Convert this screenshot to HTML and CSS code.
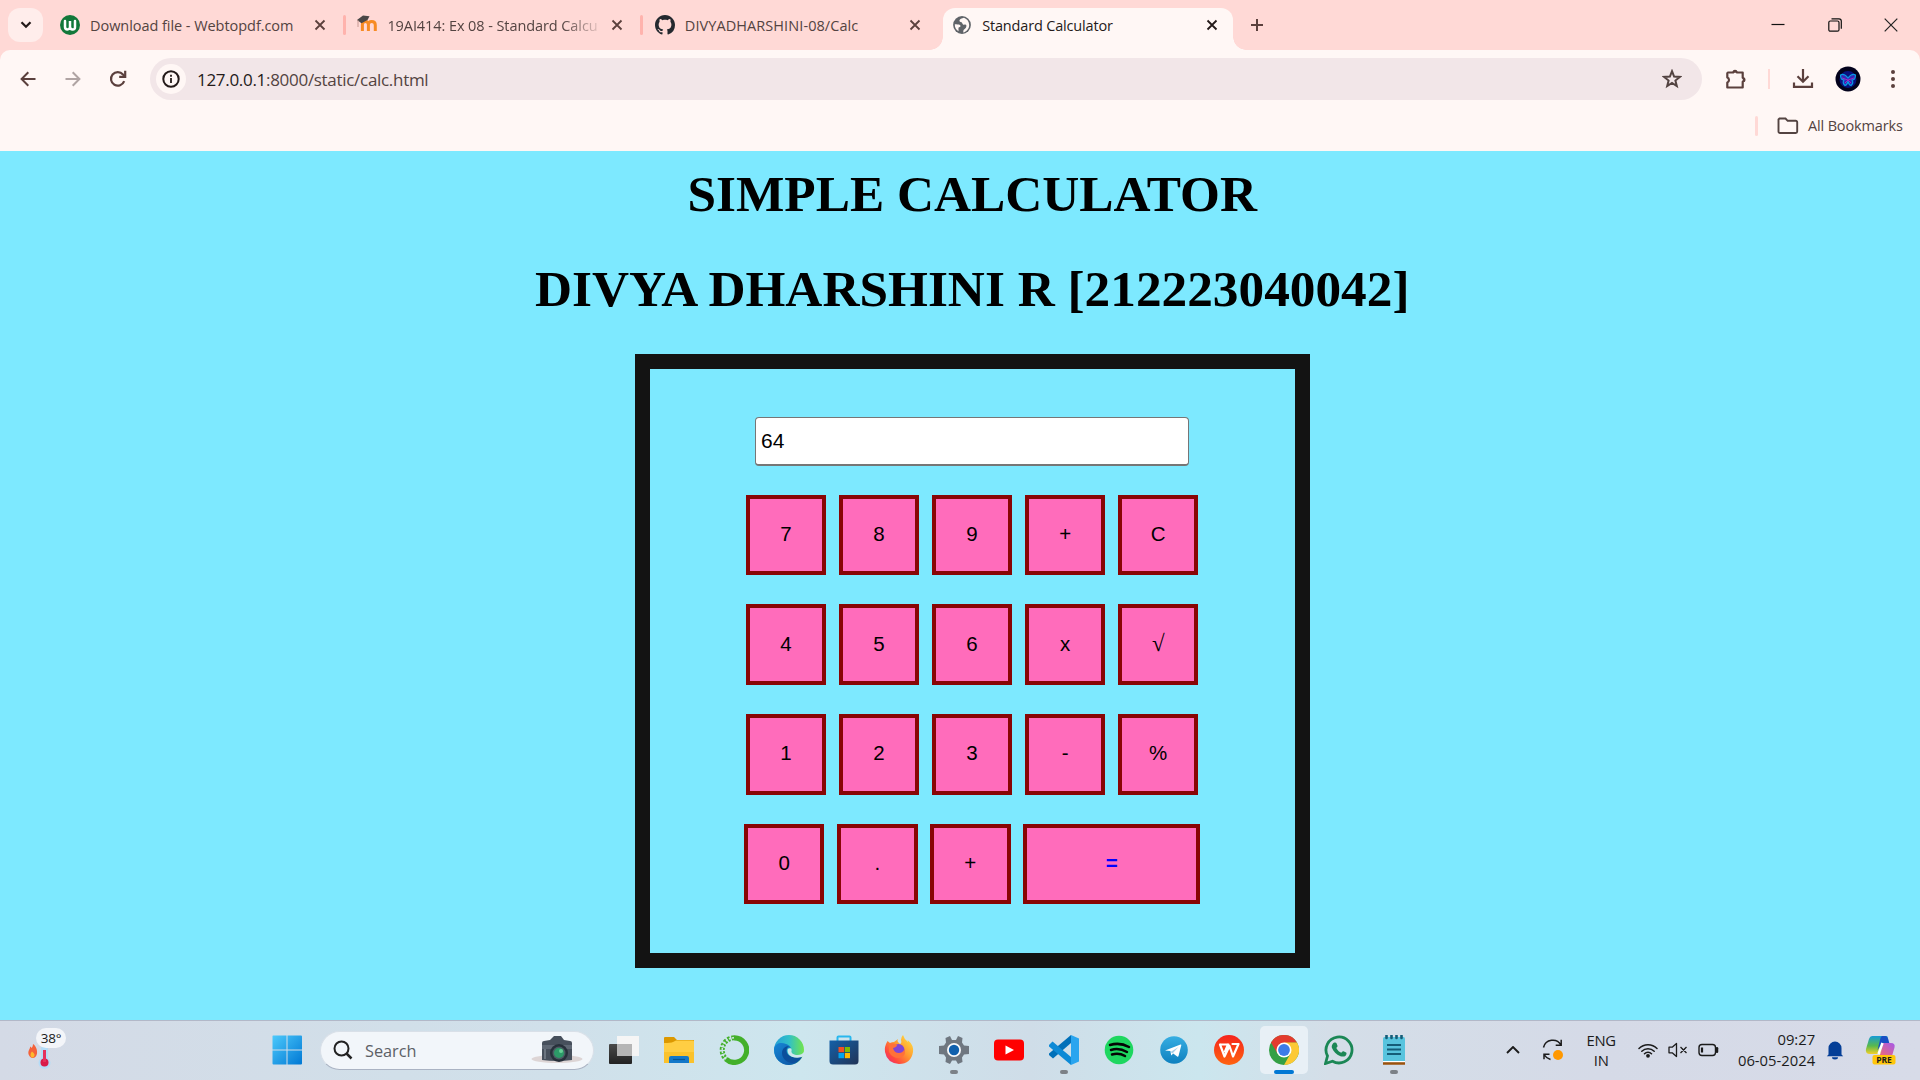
FILE: index.html
```html
<!DOCTYPE html>
<html lang="en">
<head>
<meta charset="utf-8">
<title>Standard Calculator</title>
<link rel="stylesheet" href="styles.css">
</head>
<body>
<header class="tabstrip">
  <div class="tab-search"><svg width="12" height="8" viewBox="0 0 12 8"><path d="M1.5 1.2 6 5.8l4.5-4.6" fill="none" stroke="#241a19" stroke-width="2.2"/></svg></div>
  <div class="tab">
    <svg class="favicon" viewBox="0 0 20 20"><circle cx="10" cy="10" r="10" fill="#12783a"/><path d="M5 6v6q0 2.4 2.4 2.4T10 12V6v6q0 2.4 2.6 2.4T15 12V6" fill="none" stroke="#fff" stroke-width="2.5" stroke-linecap="round"/></svg>
    <span class="title t1">Download file - Webtopdf.com</span>
    <svg class="x" viewBox="0 0 12 12"><path d="m1.5 1.5 9 9m0-9-9 9"/></svg><i class="sep"></i>
  </div>
  <div class="tab">
    <svg class="favicon" viewBox="0 0 20 20"><path d="M5.4 16V9.500q0-3 3-3 3 0 3 3V16V9.500q0-3 3.200-3 3.700 0 3.700 3.500V16" fill="none" stroke="#f78b24" stroke-width="3"/><path d="m0 5 6-4.500 6.500.8-2 3.700-6 3.200z" fill="#4a4747"/><path d="M1 5v7" stroke="#b98c83" stroke-width=".8"/></svg>
    <span class="title t2 fade">19AI414: Ex 08 - Standard Calcu</span>
    <svg class="x" viewBox="0 0 12 12"><path d="m1.5 1.5 9 9m0-9-9 9"/></svg><i class="sep"></i>
  </div>
  <div class="tab">
    <svg class="favicon" viewBox="0 0 16 16"><path fill="#24292f" d="M8 0C3.58 0 0 3.58 0 8c0 3.54 2.29 6.53 5.47 7.59.4.07.55-.17.55-.38 0-.19-.01-.82-.01-1.49-2.01.37-2.53-.49-2.69-.94-.09-.23-.48-.94-.82-1.13-.28-.15-.68-.52-.01-.53.63-.01 1.08.58 1.23.82.72 1.21 1.87.87 2.33.66.07-.52.28-.87.51-1.07-1.78-.2-3.64-.89-3.64-3.95 0-.87.31-1.59.82-2.15-.08-.2-.36-1.02.08-2.12 0 0 .67-.21 2.2.82.64-.18 1.32-.27 2-.27s1.36.09 2 .27c1.53-1.04 2.2-.82 2.2-.82.44 1.1.16 1.92.08 2.12.51.56.82 1.27.82 2.15 0 3.07-1.87 3.75-3.65 3.95.29.25.54.73.54 1.48 0 1.07-.01 1.93-.01 2.2 0 .21.15.46.55.38A8.01 8.01 0 0 0 16 8c0-4.42-3.58-8-8-8z"/></svg>
    <span class="title t3">DIVYADHARSHINI-08/Calc</span>
    <svg class="x" viewBox="0 0 12 12"><path d="m1.5 1.5 9 9m0-9-9 9"/></svg>
  </div>
  <div class="tab active">
    <svg class="favicon globe" viewBox="0 0 18 18"><circle cx="9" cy="9" r="8.9" fill="#5f6368"/><path d="M11 1.8c-2 .7-4.8 1.200-4.500 3.100.3 1.400 2.200.5 2.700 2 .4 1.600 1 1.900 2.800 1.700 1.600-.1 1.800 1.700.9 3.200-.8 1.500-2.200 1.300-2.500 2.700l-.2 2c3.500-.7 6-3.800 6-7.500 0-3.200-2-6-5.200-7.200zM1.800 8.200c1.800.2 4 0 5.200.8 1 .8.5 2.200-.9 2.200-.8 0-.6 1.200-.6 2.400v1.600c-2.300-1.300-3.900-3.900-3.700-7z" fill="#fff7f5"/></svg>
    <span class="title t4">Standard Calculator</span>
    <svg class="x" viewBox="0 0 12 12"><path d="m1.500 1.500 9 9m0-9-9 9"/></svg>
  </div>
  <div class="newtab"><svg width="14" height="14" viewBox="0 0 14 14"><path d="M7 1v12M1 7h12" stroke="#5b403d" stroke-width="2"/></svg></div>
  <div class="winctl">
    <svg width="14" height="14" viewBox="0 0 14 14"><path d="M.5 6.500h13" stroke="#111" stroke-width="1.200"/></svg>
    <svg width="14" height="14" viewBox="0 0 14 14" fill="none" stroke="#111" stroke-width="1.200"><rect x=".8" y="3" width="10.200" height="10.200" rx="1.500"/><path d="M3.500.8H11a2.300 2.300 0 0 1 2.300 2.300v7.700"/></svg>
    <svg width="14" height="14" viewBox="0 0 14 14"><path d="m.7.7 12.600 12.600m0-12.600L.7 13.300" stroke="#222" stroke-width="1.200"/></svg>
  </div>
</header>

<section class="chrome-bars">
  <div class="toolbar">
    <div class="cell"><svg width="16" height="16" viewBox="0 0 16 16" fill="none" stroke="#5b403d" stroke-width="2"><path d="M15.500 8H2M8.300 1.300 1.600 8l6.700 6.700"/></svg></div>
    <div class="cell"><svg width="16" height="16" viewBox="0 0 16 16" fill="none" stroke="#b0a4a3" stroke-width="2"><path d="M.5 8H14M7.700 1.300 14.400 8l-6.700 6.700"/></svg></div>
    <div class="cell"><svg width="18" height="18" viewBox="0 0 18 18" fill="none" stroke="#5b403d" stroke-width="2.200"><path d="M15.200 11.200A6.800 6.800 0 1 1 14 4.500l1.600 1.700"/><path d="M16.200.8v6h-6"/></svg></div>
    <div class="omnibox">
      <span class="info"><svg width="18" height="18" viewBox="0 0 18 18"><circle cx="9" cy="9" r="7.700" fill="none" stroke="#241a19" stroke-width="2"/><path d="M9 8v5M9 4.800v1.900" stroke="#241a19" stroke-width="1.800"/></svg></span>
      <span class="url"><b>127.0.0.1</b>:8000/static/calc.html</span>
      <svg class="star" width="20" height="20" viewBox="0 0 20 20"><path d="m10 2.200 2.100 5.300 5.700.4-4.400 3.600 1.400 5.600-4.800-3.100-4.800 3.100 1.400-5.600-4.400-3.600 5.700-.4z" fill="none" stroke="#534341" stroke-width="2"/></svg>
    </div>
    <div class="cell puzzle"><svg width="22" height="22" viewBox="0 0 22 22"><path d="M3 4.500h5.200a2.200 2.200 0 0 1 3.800 0h5.700v5.200a2.200 2.200 0 0 1 0 4v5.800H2.300v-5a2.700 2.700 0 0 0 0-5V5.200z" fill="none" stroke="#5b403d" stroke-width="2.200" stroke-linejoin="round"/><path d="M7.500 4.200a2.500 2.500 0 0 1 5 0zM18 9.300a2.500 2.500 0 0 1 0 5z" fill="#5b403d"/></svg></div>
    <div class="sepcell"></div>
    <div class="cell"><svg width="22" height="22" viewBox="0 0 22 22" fill="none" stroke="#5b403d" stroke-width="2.200"><path d="M11 1v12.500M5.500 8.300l5.500 5.500 5.500-5.500M2 14.500v4.300h18v-4.300"/></svg></div>
    <div class="cell"><svg width="26" height="26" viewBox="0 0 26 26"><circle cx="13" cy="13" r="12.500" fill="#03021c"/><circle cx="13" cy="13.500" r="8.500" fill="#07117e"/><path d="M13 12Q9 7 5.500 9q0 5 3.500 5-2 3 1 5.500 2-.5 3-4 1 3.500 3 4 3-2.500 1-5.500 3.500 0 3.500-5Q17 7 13 12z" fill="#3726b4" stroke="#079be5" stroke-width="1.200"/><path d="m7 12 6 2 6-2M10 17l3-3 3 3" stroke="#9c2bc3" fill="none"/></svg></div>
    <div class="cell"><svg width="4" height="20" viewBox="0 0 4 20" fill="#5b403d"><circle cx="2" cy="3" r="2"/><circle cx="2" cy="10" r="2"/><circle cx="2" cy="17" r="2"/></svg></div>
  </div>
  <div class="bookmarks">
    <i class="sep"></i>
    <svg width="22" height="18" viewBox="0 0 22 18"><path d="M2.500 1.500h6l2.200 2.300h8a1.500 1.500 0 0 1 1.500 1.500v9.200a1.500 1.500 0 0 1-1.500 1.500H3a1.500 1.500 0 0 1-1.500-1.500v-12z" fill="none" stroke="#534341" stroke-width="1.900"/></svg>
    <span class="all">All Bookmarks</span>
  </div>
</section>

<main class="page">
  <h1 class="h-a">SIMPLE CALCULATOR</h1>
  <h1 class="h-b">DIVYA DHARSHINI R [212223040042]</h1>
  <div class="calc">
    <div class="display">64</div>
    <div class="keys"><button>7</button><button>8</button><button>9</button><button>+</button><button>C</button></div>
    <div class="keys"><button>4</button><button>5</button><button>6</button><button>x</button><button class="root">√</button></div>
    <div class="keys"><button>1</button><button>2</button><button>3</button><button>-</button><button>%</button></div>
    <div class="keys last"><button>0</button><button>.</button><button>+</button><button class="eq">=</button></div>
  </div>
</main>

<footer class="taskbar">
  <div class="weather">
    <svg width="32" height="34" viewBox="0 0 32 34"><path d="M5 22C1 20 .500 16 2.500 13c.8-1.500.5-2.500.5-2.500s1.200.5 1.500 1.500C6 11 6 8 6 8c3 2 4.500 6 4 9.500-.3 2.500-2.500 5-5 4.500z" fill="#f4623a"/><path d="M5 21.500c-2-1-2-4 0-6 1 1 3 2 2.500 4-.3 1.500-1.500 2.300-2.500 2z" fill="#fdb92d"/><path d="M14 11h7v11a6 6 0 1 1-7 0z" fill="#b5dcf7"/><circle cx="17.500" cy="26.500" r="4" fill="#d81b4a"/><path d="M17.500 14v12" stroke="#e5305c" stroke-width="3"/></svg>
    <span class="temp">38°</span>
  </div>
  <svg class="start" width="30" height="30" viewBox="0 0 30 30"><defs><linearGradient id="win" x1="0" y1="0" x2="1" y2="1" gradientUnits="objectBoundingBox"><stop stop-color="#4cc9fb"/><stop offset="1" stop-color="#0078d4"/></linearGradient></defs><path d="M1 .5h13.500v14H.500V1zM15.500.5H29a1 1 0 0 1 1 1v13H15.500zM.5 15.500h14v14h-13a1 1 0 0 1-1-1zM15.500 15.500H30v13a1 1 0 0 1-1 1H15.500z" fill="url(#win)"/></svg>
  <div class="search">
    <svg class="mag" width="20" height="20" viewBox="0 0 20 20"><circle cx="8.500" cy="8.500" r="7" fill="none" stroke="#222" stroke-width="2"/><path d="m13.500 13.500 5 5" stroke="#222" stroke-width="2.500"/></svg>
    <span class="stext">Search</span>
    <svg class="camera" width="52" height="30" viewBox="0 0 52 30"><ellipse cx="26" cy="24" rx="25.500" ry="4" fill="#ddd5d5"/><path d="M11 8q0-2 2-2l6-1 4-4h7l3 4 6 1q2 0 2 2v17q-15 2-30 0z" fill="#47505c"/><path d="M11 10h30v4H11z" fill="#5f6874"/><circle cx="28" cy="18" r="9" fill="#27303a"/><circle cx="28" cy="18" r="6.500" fill="#4b5b63"/><circle cx="28" cy="18" r="5" fill="#2c9a68"/><circle cx="30" cy="16" r="2" fill="#66cf95"/><path d="M14 14v10" stroke="#6c7580" stroke-width="2"/></svg>
  </div>
  <div class="apps">
    <div class="app"><svg viewBox="0 0 30 30"><defs><linearGradient id="tv" x2="0" y2="1"><stop stop-color="#4a4a4a"/><stop offset="1" stop-color="#222"/></linearGradient></defs><rect y="9" width="23" height="20" rx="1" fill="url(#tv)"/><path d="M8 1h22v20H8z" fill="#f5f5f5"/><path d="M8 9h15v12H8z" fill="#b5b5b5"/></svg></div>
    <div class="app"><svg viewBox="0 0 30 30"><path d="M0 3q0-1 1-1h9l3 3H30v10H0z" fill="#dc9800"/><path d="M0 8q7 0 9-1l3-1.500h17q1 0 1 1V28H0z" fill="#ffce43"/><path d="M0 17h30v11H0z" fill="#fbc22c"/><path d="M5 28v-5q0-2 2-2h16q2 0 2 2v5z" fill="#1378c9"/><path d="M9 24.500h12" stroke="#075696" stroke-width="1.200"/></svg></div>
    <div class="app"><svg viewBox="0 0 30 30"><path d="M15 2.800a12.300 12.300 0 1 1-8 21.300" fill="none" stroke="#43b02a" stroke-width="5.200"/><path d="M15 2.800A12.300 12.300 0 0 0 7 24" fill="none" stroke="#43b02a" stroke-width="5" stroke-dasharray="2.500 1.500"/><path d="M15 2.800A12.300 12.300 0 0 0 7 24" fill="none" stroke="#d0e6e8" stroke-width="1.500" stroke-dasharray="2 1.300"/></svg></div>
    <div class="app"><svg viewBox="0 0 30 30"><defs><linearGradient id="eg"><stop stop-color="#259fd8"/><stop offset=".5" stop-color="#31c0c8"/><stop offset="1" stop-color="#72e54a"/></linearGradient><linearGradient id="eb" x2="1" y2="1"><stop stop-color="#1686d5"/><stop offset="1" stop-color="#0c4e9d"/></linearGradient></defs><circle cx="15" cy="15" r="15" fill="url(#eg)"/><path d="M0 14C1 8 7 7 12 9c4 1.500 5 3.500 5 5-2-3-5 0-4 3 1 4 6 7 15 5-2 4-7 8-13 8C7 30 0 24 0 14z" fill="url(#eb)"/><path d="M8 18c0-4 3-7 7-7-4 3-3 7 0 9.500 3 2.500 8 2.500 12.500.8-2 5-6 6.700-9 6.700-5 0-10.500-4-10.500-10z" fill="#0b4f9c"/><path d="M14 14c3-2 4 0 3.500 2-.500 2 2 4 6 4 3 0 5-1 6.500-3l.5 4-3 1c-5 2-11 0-13-3-1-2-1-4-.5-5z" fill="#cfe6ee"/></svg></div>
    <div class="app"><svg viewBox="0 0 30 30"><defs><linearGradient id="st" x2="1" y2="1"><stop stop-color="#1460a8"/><stop offset="1" stop-color="#213457"/></linearGradient></defs><path d="M8.500 6V2.500q0-1 1-1h11q1 0 1 1V6" fill="none" stroke="#28b7ee" stroke-width="2"/><path d="M.5 5.500h29V26q0 3.500-3.500 3.500H4Q.500 29.500.5 26z" fill="url(#st)"/><path d="M9.500 12H15v5.200H9.500z" fill="#f25022"/><path d="M15.800 12h5.200v5.200h-5.200z" fill="#7fba00"/><path d="M9.500 18H15v5.200H9.500z" fill="#00a4ef"/><path d="M15.800 18h5.200v5.200h-5.200z" fill="#ffb900"/></svg></div>
    <div class="app"><svg viewBox="0 0 30 30"><defs><linearGradient id="ff" x1="1" x2="0" y2="1"><stop stop-color="#ffed45"/><stop offset=".45" stop-color="#ff9830"/><stop offset=".75" stop-color="#ff463f"/><stop offset="1" stop-color="#e02293"/></linearGradient></defs><path d="M3.500 6 6 8q2-1 4-1l4-3q-1 2 0 3l2 2q2-1 1-4 0-3 2-5 1 4 5 7 0-1-.5-2Q30 10 29 17 27 29 15 29 3 28 1 17 0 12 3.500 6z" fill="url(#ff)"/><circle cx="14.500" cy="15" r="6" fill="#8046d5"/><path d="M5 9q4-2 8 1 0 2-4 3 1 5 6 5 4 0 5.500-4 2 8-5.500 9-7 0-10-6z" fill="#ff7139"/></svg></div>
    <div class="app run"><svg viewBox="0 0 30 30"><path d="m11 1 2 4h4l2-4 4.500 2-.5 4.500 2 3 5 .5v8l-5 .5-2 3 .5 4.500L19 29l-2-3.500h-4L11 29l-4.500-2L7 22.500l-2-3-5-.5v-8l5-.5 2-3L6.500 3z" fill="#6f7780"/><circle cx="15" cy="15" r="7" fill="#f7f9fb"/><circle cx="15" cy="15" r="5.200" fill="#0f60ad"/></svg></div>
    <div class="app"><svg viewBox="0 0 30 30"><rect y="4.500" width="30" height="21" rx="4" fill="red"/><path d="m11.500 10.500 8.500 4.500-8.500 4.500z" fill="#fff"/></svg></div>
    <div class="app run"><svg viewBox="0 0 30 30"><path d="M22 0v8L4 23.500 0 20V18.500L22 0z" fill="#0070b9"/><path d="M3.500 6.500 0 10v1.500L22 30v-8z" fill="#0d8ad6"/><path d="m22 0 8 3.500v23L22 30z" fill="#2aa5ef"/></svg></div>
    <div class="app"><svg viewBox="0 0 30 30"><circle cx="15" cy="15" r="14.300" fill="#1ed760"/><path d="M6 10q10-3 19 2M7 15q8-2.500 16 2M8 19.500q7-2 13 1.500" stroke="#050505" stroke-width="2.500" fill="none" stroke-linecap="round"/></svg></div>
    <div class="app"><svg viewBox="0 0 30 30"><defs><linearGradient id="tg" x2="0" y2="1"><stop stop-color="#37aee2"/><stop offset="1" stop-color="#0d80bf"/></linearGradient></defs><circle cx="15" cy="15" r="13.800" fill="url(#tg)"/><path d="m6 15.500 15.500-6q1-.3.8.8L19.500 21q-.3 1-1.300.4l-4-3-2 2-.8-4.500z" fill="#fff"/><path d="m11.500 17 8-5-6 6.500z" fill="#a9cfe6"/></svg></div>
    <div class="app"><svg viewBox="0 0 30 30"><defs><linearGradient id="wp" x2="0" y2="1"><stop stop-color="#f5241d"/><stop offset="1" stop-color="#ff6410"/></linearGradient></defs><circle cx="15" cy="15" r="15" fill="url(#wp)"/><path d="M6 9.500h8.500M6 9.500l4.500 12 5-10.500 3.500 10.500L24.500 9h-6M14 9.500l-3 7" stroke="#fff" stroke-width="2.200" fill="none" stroke-linejoin="round" stroke-linecap="round"/></svg></div>
    <div class="app current"><svg viewBox="0 0 30 30"><circle cx="15" cy="15" r="15" fill="#34a045"/><path d="M2 7.500A15 15 0 0 1 28 7.500L15 8 8.500 18.500z" fill="#e33b2e"/><path d="M28 7.500A15 15 0 0 1 15 30l6.500-11.500L15 7.500z" fill="#fcc934"/><circle cx="15" cy="15" r="7.500" fill="#fff"/><circle cx="15" cy="15" r="5.900" fill="#3c7be8"/></svg></div>
    <div class="app"><svg viewBox="0 0 30 30"><path d="m1.500 28.500 2-7.500a13 13 0 1 1 5 5.200z" fill="none" stroke="#1b8755" stroke-width="2.800"/><path d="M10.500 7.500c1-.3 1.700 0 2 .8l1 2.400c.3 1-.8 1.700-1.200 2.300 1.200 2.300 2.800 3.800 5 4.800.7-.8 1.300-1.900 2.200-1.500l2.600 1.300c.7.400.5 2-.3 2.800-1.300 1.300-3.300 1.500-5.300.8-4.500-1.700-7-4.700-8.500-8.200-.7-2 .5-5 2.500-5.500z" fill="#1b8755"/></svg></div>
    <div class="app run"><svg viewBox="0 0 30 30"><rect x="4" y="2" width="22" height="25" rx="1.500" fill="#58c4de"/><path d="M4 26h22v1H4z" fill="#fff"/><path d="M4 28.500h22" stroke="#9b520c" stroke-width="2.500"/><path d="M8 10h14M8 14.500h14M8 19h14" stroke="#155d78" stroke-width="1.800"/><path d="M7.500.500v2.500M12.500.500v2.500M17.500.500v2.500M22.500.500v2.500" stroke="#155d78" stroke-width="2.600" stroke-linecap="round"/></svg></div>
  </div>
  <div class="tray">
    <svg class="chev" width="14" height="8" viewBox="0 0 14 8"><path d="m1 7 6-6 6 6" fill="none" stroke="#1b1b1b" stroke-width="1.900"/></svg>
    <svg class="sync" width="22" height="22" viewBox="0 0 22 22"><path d="M1.500 8.500A9.500 9.500 0 0 1 19 6M19.200.8v5.500h-5.500M2 20.200v-5h5.500M2 15.500Q4 19 8.500 20.500" fill="none" stroke="#1b1b1b" stroke-width="1.500"/><circle cx="16" cy="16" r="5" fill="#ff9800"/></svg>
    <div class="lang"><span>ENG</span><span>IN</span></div>
    <svg class="wifi" width="20" height="16" viewBox="0 0 20 16"><path d="M1 6.500a12.500 12.500 0 0 1 18 0M3.800 9.200a8.800 8.800 0 0 1 12.400 0M6.500 11.800a5 5 0 0 1 7 0" fill="none" stroke="#1b1b1b" stroke-width="1.500" stroke-linecap="round"/><circle cx="10" cy="13.800" r="1.900" fill="#1b1b1b"/></svg>
    <svg class="vol" width="20" height="16" viewBox="0 0 20 16"><path d="M1 5.200h3.200L8.500 1.500v13L4.200 10.800H1zM12.500 5l6 6m0-6-6 6" fill="none" stroke="#1b1b1b" stroke-width="1.300" stroke-linejoin="round"/></svg>
    <svg class="bat" width="21" height="14" viewBox="0 0 21 14"><rect x="1" y="1.500" width="16.500" height="11" rx="3" fill="none" stroke="#1b1b1b" stroke-width="1.400"/><path d="M4 4.500v5" stroke="#1b1b1b" stroke-width="2.200"/><path d="M19 5.200v3.600" stroke="#1b1b1b" stroke-width="2.500" stroke-linecap="round"/></svg>
    <div class="clock"><span class="tm">09:27</span><span class="dt">06-05-2024</span></div>
    <svg class="bell" width="18" height="20" viewBox="0 0 18 20"><path d="M2.500 14.500V8a6.500 6.500 0 0 1 13 0v6.500l1.700 1.800H.8zM6 17.300h6a3 2.200 0 0 1-6 0z" fill="#053f97"/></svg>
    <svg class="copilot" width="32" height="30" viewBox="0 0 32 30"><defs><linearGradient id="c1" x2="0" y2="1"><stop stop-color="#159bd7"/><stop offset=".55" stop-color="#59b94c"/><stop offset="1" stop-color="#f3d028"/></linearGradient><linearGradient id="c2" x1="1" x2="0" y2="1"><stop stop-color="#a459e9"/><stop offset="1" stop-color="#f46c72"/></linearGradient></defs><path d="M7.500 1H21q3 0 1 4l-7 14H5q-5 0-4-5L4 4q1-3 3.500-3z" fill="url(#c1)"/><path d="M17 1h3q2.500 0 3.500 4l1 4h-8l-4 6L15 5q.5-3.500 2-4z" fill="#184fc4"/><path d="M18 8h8q4.500 0 3.500 4.500L27 21H13q2 0 3-4z" fill="url(#c2)"/><path d="m17.500 8-4 11" stroke="#fff" stroke-width="2.500"/><rect x="7.500" y="20" width="23" height="9.500" rx="2" fill="#ffc60a"/><text x="19" y="27.500" text-anchor="middle" class="pre">PRE</text></svg>
  </div>
</footer>
</body>
</html>
```
FILE: styles.css
```css
* { box-sizing: border-box; }
body { margin: 0; width: 1920px; height: 1080px; overflow: hidden; display: flex; flex-direction: column; font-family: "Open Sans", "Noto Sans", sans-serif; background: #ffd9d6; }
svg { display: block; flex: none; }
span { white-space: nowrap; }

.tabstrip { height: 50px; flex: none; display: flex; background: #ffd9d6; }
.tab-search { width: 35px; height: 34px; margin: 8px 6px 0 8px; border-radius: 12px; background: #ffedeb; display: flex; align-items: center; justify-content: center; }
.tab { width: 297.4px; height: 50px; flex: none; display: flex; align-items: center; padding-left: 11px; color: #534341; position: relative; }
.favicon { width: 20px; height: 20px; margin-right: 10px; }
.globe { width: 18px; height: 18px; margin: 0 11px 0 1px; }
.title { width: 212px; margin-right: 12px; padding-top: 2px; font-size: 14.5px; overflow: hidden; line-height: 24px; }
.t1 { letter-spacing: -0.05px; }
.t2 { letter-spacing: -0.08px; }
.t3 { letter-spacing: 0.08px; }
.t4 { letter-spacing: -0.17px; }
.fade { -webkit-mask-image: linear-gradient(to right, #000 175px, transparent 218px); mask-image: linear-gradient(to right, #000 175px, transparent 218px); }
.x { width: 12px; height: 12px; fill: none; stroke: #5b403d; stroke-width: 1.8; }
.sep { width: 3px; height: 20px; border-radius: 2px; background: #ffb3ad; flex: none; }
.tab .sep { margin-left: 17px; }
.active { color: #241a19; z-index: 0; }
.active .x { stroke: #241a19; }
.active::before { content: ""; position: absolute; z-index: -1; left: 2px; right: 6px; top: 8px; bottom: 0; border-radius: 12px 12px 0 0; background: #fff7f5; }
.active::after { content: ""; position: absolute; z-index: -1; left: -11px; right: -7px; bottom: 0; height: 13px; background: radial-gradient(circle at 0 0, transparent 12.5px, #fff7f5 13px) 0 0 / 13px 13px no-repeat, radial-gradient(circle at 100% 0, transparent 12.5px, #fff7f5 13px) 100% 0 / 13px 13px no-repeat; }
.newtab { width: 36px; display: flex; align-items: center; justify-content: center; }
.winctl { margin-left: auto; margin-right: 22px; display: flex; align-items: center; gap: 42.5px; }

.chrome-bars { height: 101px; flex: none; background: #fff7f5; border-radius: 10px 10px 0 0; }
.toolbar { display: flex; align-items: center; padding: 8px 5px 0; height: 50px; }
.cell { width: 45px; display: flex; justify-content: center; flex: none; }
.omnibox { width: 1552px; height: 42px; margin: 0 12px 0 10px; border-radius: 21px; background: #f2e6e8; display: flex; align-items: center; padding: 0 20px 0 6px; }
.info { width: 30px; height: 30px; border-radius: 50%; background: #fff7f5; display: flex; align-items: center; justify-content: center; }
.url { margin-left: 11px; padding-top: 1px; font-size: 17px; letter-spacing: -0.3px; color: #534341; line-height: 24px; }
.url b { font-weight: 400; color: #241a19; }
.star { margin-left: auto; }
.puzzle { width: 44px; }
.sepcell { width: 22px; height: 20px; background: linear-gradient(#ffd9d6, #ffd9d6) 50% 0 / 2px 20px no-repeat; flex: none; }
.bookmarks { display: flex; align-items: center; justify-content: flex-end; height: 51px; padding-right: 19px; }
.bookmarks .sep { background: #ffd9d6; margin-right: 19px; }
.all { width: 93px; margin-left: 9px; font-size: 14.5px; letter-spacing: -0.15px; color: #534341; }

.page { height: 869px; flex: none; background: #7de9ff; display: flex; flex-direction: column; align-items: center; padding-left: 24.5px; color: #000; }
h1 { margin: 0; font: bold 51.3px/58px "Liberation Serif", serif; white-space: nowrap; }
.h-a { margin-top: 14px; }
.h-b { margin-top: 37px; }
.calc { width: 674.5px; height: 614px; margin-top: 36px; border: 15.6px solid #131313; padding: 48px 0.4px 0 0; display: flex; flex-direction: column; align-items: center; }
.display { width: 434px; height: 48.5px; border: 1px solid #767676; border-bottom-width: 2px; border-radius: 4px; background: #fff; font: 21px/45px "Liberation Sans", sans-serif; padding-left: 5px; margin-bottom: 29px; }
.keys { display: flex; gap: 12.6px; margin-bottom: 29px; }
.keys button { width: 80.5px; height: 80.7px; padding: 0 0 2px; border: 4px solid #880505; background: #ff6cbb; font: 20.5px "Liberation Sans", sans-serif; color: #000; }
.keys .root { font-family: "Liberation Serif", serif; font-size: 23px; }
.keys .eq { width: 177px; color: #00f; font-weight: bold; }

.taskbar { height: 60px; flex: none; border-top: 1px solid #b2b8c8; display: flex; align-items: center; background: linear-gradient(90deg, #d4dae6 0, #d1dfe9 400px, #d0e0ea 560px, #cde6ee 800px, #cfdde8 1030px, #cbe6ee 1200px, #d4dee8 1330px, #d5dae7 1600px, #d7dbe8 100%); color: #1b1b1b; padding-bottom: 1px; }
.weather { width: 40px; height: 44px; margin-left: 27px; position: relative; padding-top: 8px; }
.temp { position: absolute; left: 9px; top: 0; width: 30px; height: 20px; border-radius: 10px; background: #f3f5f9; font-size: 13.5px; line-height: 21px; text-align: center; letter-spacing: -0.3px; }
.start { margin-left: 205px; }
.search { width: 274px; height: 39px; margin-left: 18px; border-radius: 20px; background: #f2f6fa; border: 1px solid #d9e0e8; border-bottom-color: #aab3c3; display: flex; align-items: center; padding: 0 10px 0 12px; }
.stext { margin-left: 12px; padding-top: 1px; font-size: 16.3px; color: #5c6066; letter-spacing: 0; }
.camera { margin-left: auto; }
.apps { display: flex; margin-left: 5.5px; gap: 7.06px; }
.app { width: 48px; height: 48px; border-radius: 5px; display: flex; align-items: center; justify-content: center; position: relative; }
.app svg { width: 30px; height: 30px; }
.current { background: #e8f0f6; }
.run::after, .current::after { content: ""; position: absolute; left: 20px; bottom: 0; width: 8px; height: 4px; border-radius: 2px; background: #7c8187; }
.current::after { left: 14px; width: 20px; background: #0078d4; }
.tray { display: flex; align-items: center; margin-left: 88px; }
.sync { margin-left: 22px; }
.lang { width: 34px; margin-left: 20px; display: flex; flex-direction: column; align-items: center; font-size: 14.8px; line-height: 20px; letter-spacing: -0.3px; }
.wifi { margin-left: 20px; }
.vol { margin-left: 10px; }
.bat { margin-left: 10px; }
.clock { width: 96px; display: flex; flex-direction: column; align-items: flex-end; font-size: 14.8px; line-height: 20px; }
.tm { position: relative; top: -1px; }
.bell { margin-left: 11px; }
.copilot { margin-left: 21px; }
.pre { font: bold 8.5px "Open Sans", sans-serif; fill: #1b1b1b; }
```
